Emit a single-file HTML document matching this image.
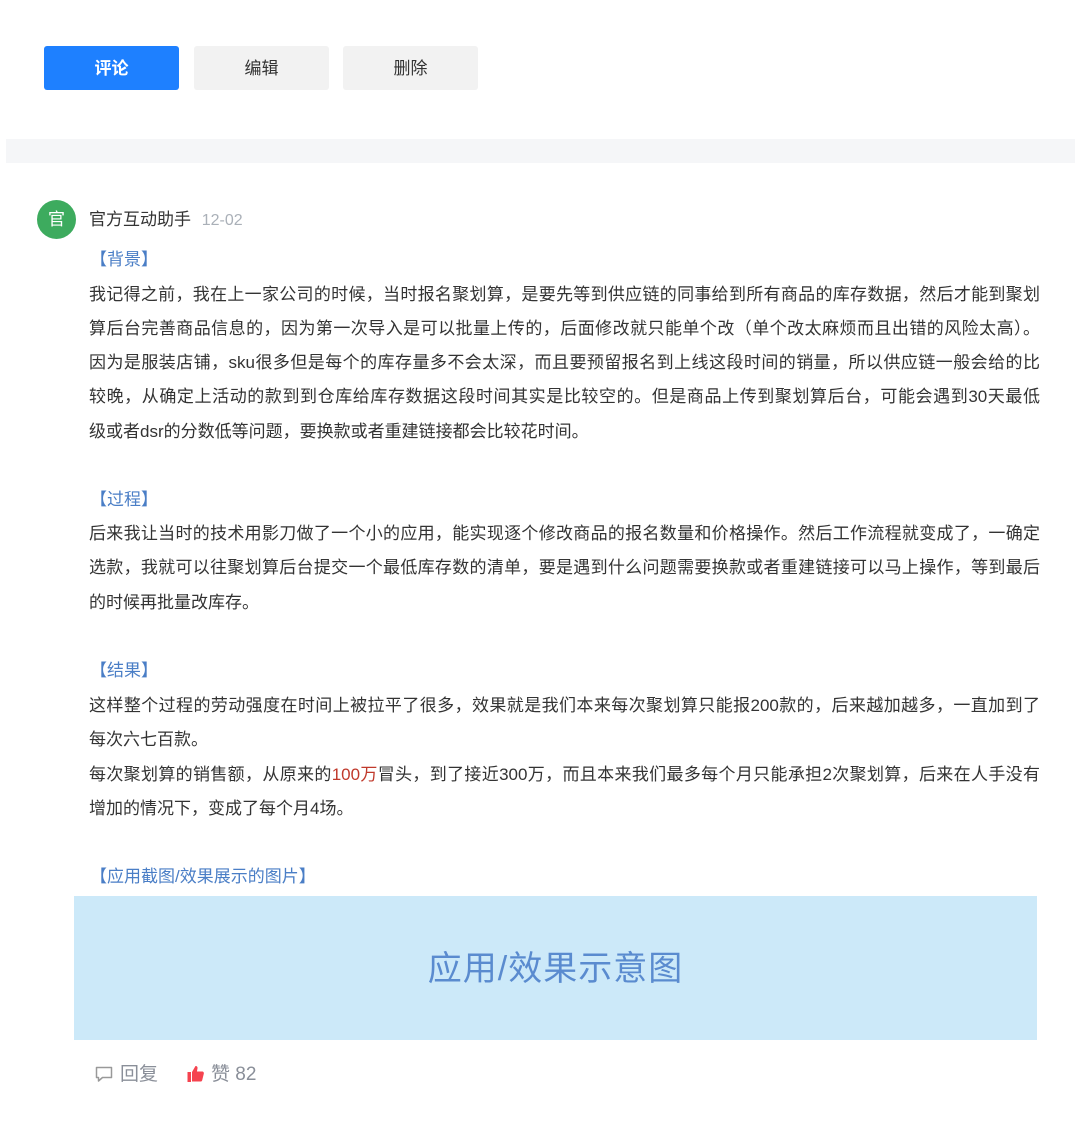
<!DOCTYPE html>
<html><head><meta charset="utf-8"><style>
*{margin:0;padding:0;box-sizing:border-box}
body{width:1080px;height:1131px;background:#fff;position:relative;overflow:hidden;font-family:"Liberation Sans","Noto Sans CJK SC",sans-serif;color:#333}
.btn{position:absolute;top:46px;height:44px;width:135px;border-radius:3px;font-size:17px;line-height:46px;text-align:center}
.l{position:absolute;left:89px;font-size:17px;line-height:28px;white-space:nowrap;color:#333}
.j{width:951px;text-align:justify;text-align-last:justify}
.h{color:#4a7ec6;left:90px}
</style></head><body>
<div class="btn" style="left:44px;background:#1e80ff;color:#fff;font-weight:bold">评论</div>
<div class="btn" style="left:194px;background:#f2f2f2;color:#333">编辑</div>
<div class="btn" style="left:343px;background:#f2f2f2;color:#333">删除</div>
<div style="position:absolute;left:6px;top:139px;width:1069px;height:24px;background:#f5f6f8"></div>
<div style="position:absolute;left:37px;top:200px;width:39px;height:39px;border-radius:50%;background:#3dab5e;color:#fff;font-size:17px;line-height:39px;text-align:center">官</div>
<div class="l" style="top:206px;left:89px;color:#333">官方互动助手 <span style="color:#aab0b8;font-size:16px;margin-left:6px">12-02</span></div>
<div class="l h" style="top:246px">【背景】</div>
<div class="l j" style="top:281px">我记得之前，我在上一家公司的时候，当时报名聚划算，是要先等到供应链的同事给到所有商品的库存数据，然后才能到聚划</div>
<div class="l j" style="top:315px">算后台完善商品信息的，因为第一次导入是可以批量上传的，后面修改就只能单个改（单个改太麻烦而且出错的风险太高）。</div>
<div class="l j" style="top:349px">因为是服装店铺，sku很多但是每个的库存量多不会太深，而且要预留报名到上线这段时间的销量，所以供应链一般会给的比</div>
<div class="l j" style="top:383px">较晚，从确定上活动的款到到仓库给库存数据这段时间其实是比较空的。但是商品上传到聚划算后台，可能会遇到30天最低</div>
<div class="l" style="top:418px">级或者dsr的分数低等问题，要换款或者重建链接都会比较花时间。</div>
<div class="l h" style="top:486px">【过程】</div>
<div class="l j" style="top:520px">后来我让当时的技术用影刀做了一个小的应用，能实现逐个修改商品的报名数量和价格操作。然后工作流程就变成了，一确定</div>
<div class="l j" style="top:554px">选款，我就可以往聚划算后台提交一个最低库存数的清单，要是遇到什么问题需要换款或者重建链接可以马上操作，等到最后</div>
<div class="l" style="top:589px">的时候再批量改库存。</div>
<div class="l h" style="top:657px">【结果】</div>
<div class="l j" style="top:692px">这样整个过程的劳动强度在时间上被拉平了很多，效果就是我们本来每次聚划算只能报200款的，后来越加越多，一直加到了</div>
<div class="l" style="top:726px">每次六七百款。</div>
<div class="l j" style="top:761px">每次聚划算的销售额，从原来的<span style="color:#c0392b">100万</span>冒头，到了接近300万，而且本来我们最多每个月只能承担2次聚划算，后来在人手没有</div>
<div class="l" style="top:795px">增加的情况下，变成了每个月4场。</div>
<div class="l h" style="top:863px">【应用截图/效果展示的图片】</div>
<div style="position:absolute;left:74px;top:896px;width:963px;height:144px;background:#cce9f9;color:#5a8bcf;font-size:34px;line-height:146px;text-align:center;letter-spacing:1px">应用/效果示意图</div>
<svg style="position:absolute;left:95px;top:1066px" width="18" height="17" viewBox="0 0 18 17"><path d="M1.5 1.5h15v10h-9l-4 3.5v-3.5h-2z" fill="none" stroke="#999" stroke-width="1.5" stroke-linejoin="round"/></svg>
<div class="l" style="top:1061px;left:120px;color:#8a8f99;font-size:19px">回复</div>
<svg style="position:absolute;left:187px;top:1065px" width="18" height="18" viewBox="0 0 18 18"><rect x="0.5" y="7" width="3.5" height="10" fill="#f5434f"/><path d="M5 7l3.5-6c1.5 0 2.3 1 2 2.5l-.6 3h5.2c1.2 0 2 1 1.7 2.2l-1.6 6.5c-.2.8-.9 1.3-1.7 1.3H5z" fill="#f5434f"/></svg>
<div class="l" style="top:1061px;left:211px;color:#8a8f99;font-size:19px">赞 82</div>
</body></html>
